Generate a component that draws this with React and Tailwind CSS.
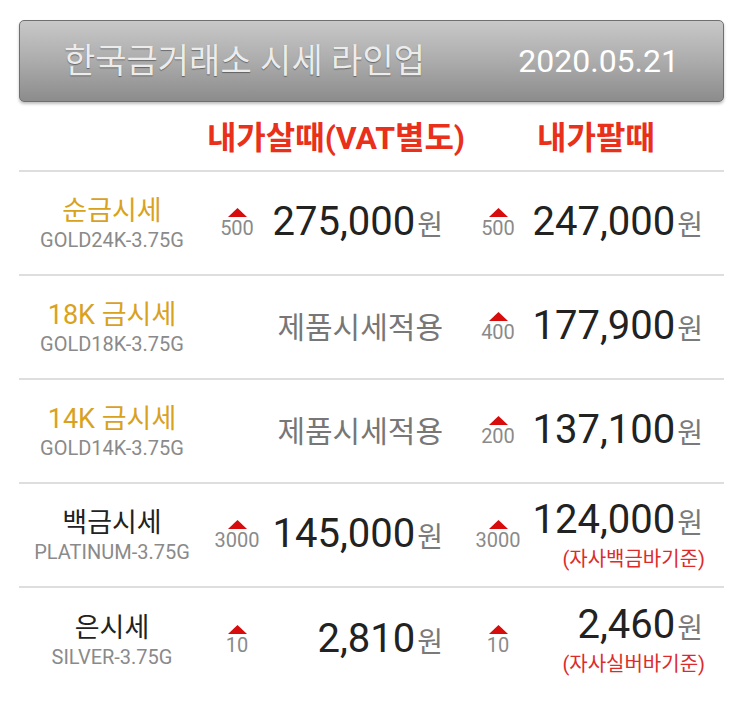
import React from 'react'

const rows = [
  {
    name: '순금시세',
    sub: 'GOLD24K-3.75G',
    gold: true,
    buy: { diff: '500', price: '275,000' },
    sell: { diff: '500', price: '247,000' },
  },
  {
    name: '18K 금시세',
    sub: 'GOLD18K-3.75G',
    gold: true,
    buy: null,
    sell: { diff: '400', price: '177,900' },
  },
  {
    name: '14K 금시세',
    sub: 'GOLD14K-3.75G',
    gold: true,
    buy: null,
    sell: { diff: '200', price: '137,100' },
  },
  {
    name: '백금시세',
    sub: 'PLATINUM-3.75G',
    buy: { diff: '3000', price: '145,000' },
    sell: { diff: '3000', price: '124,000', note: '(자사백금바기준)' },
  },
  {
    name: '은시세',
    sub: 'SILVER-3.75G',
    buy: { diff: '10', price: '2,810' },
    sell: { diff: '10', price: '2,460', note: '(자사실버바기준)' },
  },
]

function Up({ diff }) {
  return (
    <div className="flex w-[36px] shrink-0 flex-col items-center">
      <svg width="19" height="9" viewBox="0 0 19 9">
        <polygon points="9.5,0 19,9 0,9" fill="#d70c0c" />
      </svg>
      <span className="mt-[1px] text-[20px] leading-[21px] text-[#8a8a8a]">{diff}</span>
    </div>
  )
}

function Price({ price }) {
  return (
    <div className="flex items-baseline justify-end">
      <span className="text-[40px] leading-[44px] text-[#222]">{price}</span>
      <span className="ml-[2px] text-[28px] text-[#7a7a7a]">원</span>
    </div>
  )
}

export default function App() {
  return (
    <div className="h-[708px] w-[743px] overflow-hidden bg-white px-[19px] pt-[20px] font-['Roboto','Noto_Sans_CJK_KR',sans-serif]">
      <div className="flex h-[82px] items-center justify-between rounded-[5px] border border-[#6f6f6f] bg-gradient-to-b from-[#c8c8c8] via-[#acacac] to-[#8c8c8c] pl-[44px] pr-[44px] shadow-[0_2px_3px_rgba(0,0,0,0.25)]">
        <span className="text-[34px] text-[#ececec] [text-shadow:0_1px_1px_rgba(0,0,0,0.4)]">
          한국금거래소 시세 라인업
        </span>
        <span className="text-[32px] text-white">2020.05.21</span>
      </div>

      <div className="grid h-[70px] grid-cols-[186px_262px_258px] items-center border-b-2 border-[#dedede] pt-[4px] text-[32px] font-bold text-[#e8301a]">
        <div />
        <div className="text-center">내가살때(VAT별도)</div>
        <div className="text-center">내가팔때</div>
      </div>

      {rows.map((r, i) => (
        <div
          key={r.sub}
          className={`grid h-[104px] grid-cols-[186px_262px_258px] items-center ${
            i < rows.length - 1 ? 'border-b-2 border-[#dedede]' : ''
          }`}
        >
          <div className="flex flex-col items-center">
            <span className={`text-[27px] leading-[33px] ${r.gold ? 'text-[#d9a21e]' : 'text-[#222]'}`}>
              {r.name}
            </span>
            <span className="text-[20px] leading-[24px] text-[#8a8a8a]">{r.sub}</span>
          </div>

          <div className="flex items-center pl-[14px] pr-[24px]">
            {r.buy ? (
              <>
                <Up diff={r.buy.diff} />
                <div className="flex-1">
                  <Price price={r.buy.price} />
                </div>
              </>
            ) : (
              <div className="flex-1 text-right text-[30px] text-[#777]">제품시세적용</div>
            )}
          </div>

          <div className="flex items-center pl-[13px] pr-[22px]">
            <Up diff={r.sell.diff} />
            <div className="flex flex-1 flex-col items-end">
              <Price price={r.sell.price} />
              {r.sell.note && (
                <span className="-mr-[2px] text-[20px] leading-[28px] text-[#dd2b2b]">{r.sell.note}</span>
              )}
            </div>
          </div>
        </div>
      ))}
    </div>
  )
}
